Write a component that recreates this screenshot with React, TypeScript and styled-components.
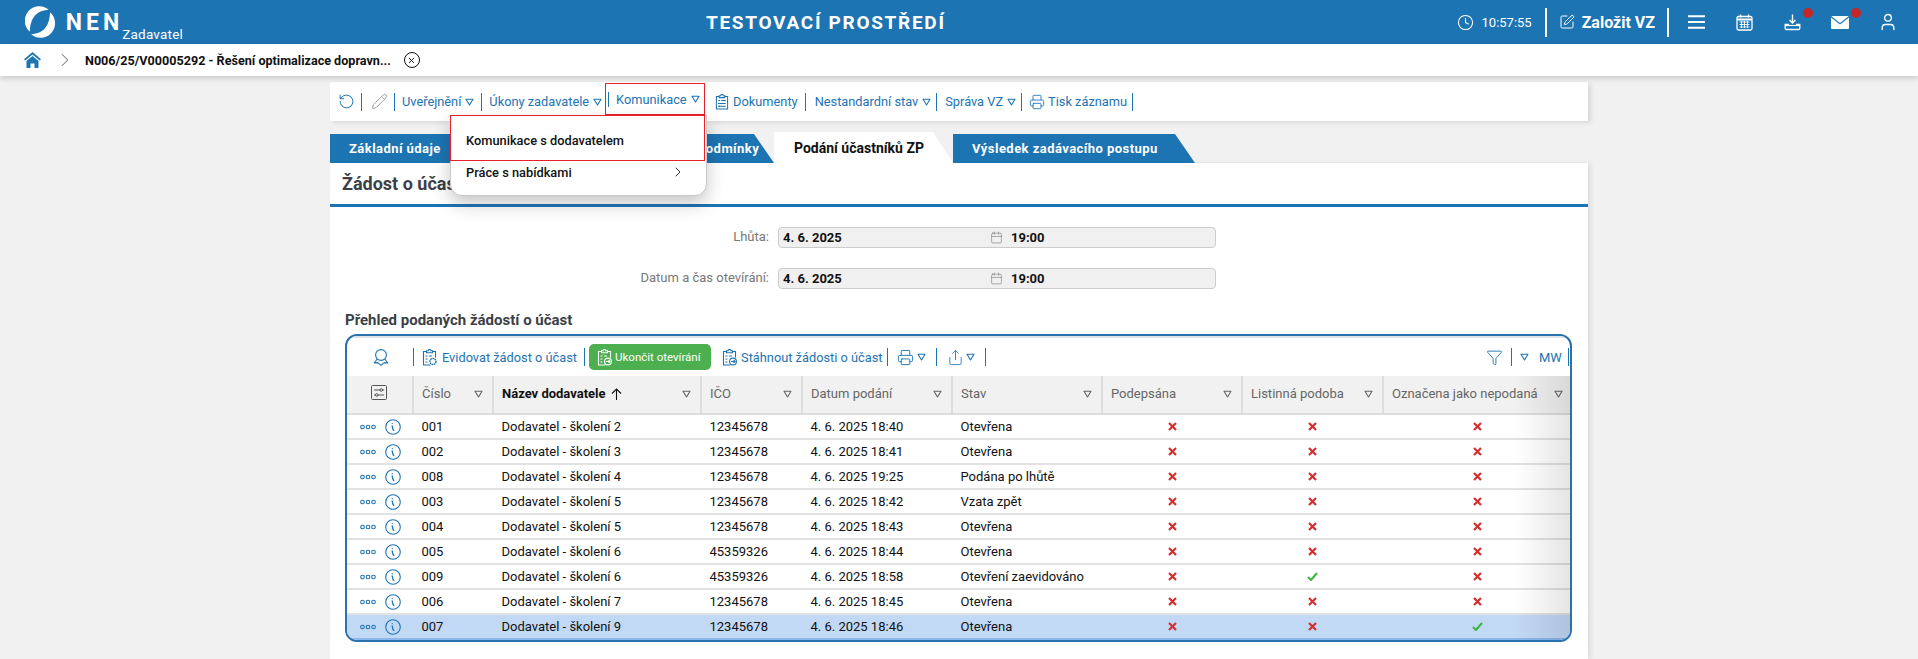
import React from "react";
import styled, { createGlobalStyle } from "styled-components";
import { Calendar, ChevronRight, Clock, Funnel, Pencil, Printer, RotateCcw, Share, SquarePen, User, X } from "lucide-react";

const BLUE = "#1d74b3";

const GlobalStyle = createGlobalStyle`
  html, body { margin: 0; padding: 0; height: 100%; overflow: hidden; }
  body { background: #f1f1f1; font-family: Roboto, "Liberation Sans", sans-serif; font-size: 13px; color: #111; }
`;

const Page = styled.div`
  height: 659px;
  display: flex;
  flex-direction: column;
  overflow: hidden;
`;

const TopBar = styled.header`
  height: 44px;
  flex: none;
  background: ${BLUE};
  color: #fff;
  display: flex;
  align-items: center;
  padding-left: 25px;
  box-sizing: border-box;
`;

const Brand = styled.div`
  display: flex;
  align-items: center;
  width: 158px;
  flex: none;
`;

const BrandName = styled.span`
  font-size: 23px;
  font-weight: 700;
  letter-spacing: 4px;
  margin-left: 11px;
  line-height: 1;
  margin-top: 1px;
`;

const BrandRole = styled.span`
  font-size: 13.5px;
  margin-left: -1px;
  margin-top: 26px;
  line-height: 1;
  letter-spacing: 0.2px;
`;

const EnvTitle = styled.div`
  margin-left: 523px;
  font-size: 19px;
  font-weight: 700;
  letter-spacing: 1.7px;
  white-space: nowrap;
`;

const TopRight = styled.div`
  margin-left: auto;
  padding-right: 6px;
  display: flex;
  align-items: center;
  height: 100%;
`;

const TimeText = styled.span`
  font-size: 13px;
  margin: 0 13px 0 8px;
`;

const TopSep = styled.span`
  width: 2px;
  height: 29px;
  background: #fff;
`;

const CreateLink = styled.span`
  display: flex;
  align-items: center;
  gap: 7px;
  padding: 0 12px;
  font-size: 16px;
  font-weight: 700;
`;

const TopIcon = styled.span<{ $dot?: boolean }>`
  position: relative;
  width: 48px;
  height: 44px;
  display: flex;
  align-items: center;
  justify-content: center;
  flex: none;
  ${(p) =>
    p.$dot &&
    `&::after {
      content: "";
      position: absolute;
      top: 8px;
      right: 3px;
      width: 10px;
      height: 10px;
      border-radius: 50%;
      background: #c62828;
    }`}
`;

const BurgerSlot = styled(TopIcon)`
  margin-left: 3px;
`;

const Crumbs = styled.nav`
  height: 32px;
  flex: none;
  background: #fff;
  box-shadow: 0 2px 6px rgba(0, 0, 0, 0.18);
  display: flex;
  align-items: center;
  padding-left: 24px;
  position: relative;
  z-index: 2;
`;

const CrumbArrow = styled(ChevronRight)`
  margin-left: 13px;
  flex: none;
`;

const CrumbTitle = styled.span`
  font-weight: 700;
  font-size: 12.6px;
  margin-left: 9px;
  white-space: nowrap;
`;

const CloseRound = styled.span`
  width: 16px;
  height: 16px;
  box-sizing: border-box;
  border: 1.3px solid #111;
  border-radius: 50%;
  margin-left: 13px;
  display: flex;
  align-items: center;
  justify-content: center;
`;

const Main = styled.main`
  width: 1258px;
  margin: 6px auto 0;
  flex: 1;
  display: flex;
  flex-direction: column;
`;

const ActionBar = styled.div`
  height: 39px;
  flex: none;
  background: #fff;
  box-shadow: 3px 2px 4px rgba(0, 0, 0, 0.1);
  display: flex;
  align-items: center;
  padding-left: 8px;
  color: ${BLUE};
  white-space: nowrap;
`;

const Sep = styled.span<{ $l: number; $r: number; $h?: number }>`
  width: 1px;
  height: ${(p) => p.$h ?? 18}px;
  background: ${BLUE};
  margin: 0 ${(p) => p.$r}px 0 ${(p) => p.$l}px;
  flex: none;
`;

const BarText = styled.span`
  display: inline-flex;
  align-items: center;
  font-size: 12.8px;
`;

const MenuAnchor = styled.div`
  position: relative;
  height: 32px;
  width: 100px;
  margin: 1px 0 6px 3px;
  border: 1px solid #e8202a;
  box-sizing: border-box;
  display: flex;
  align-items: center;
  padding-left: 1px;
  flex: none;
`;

const Dropdown = styled.div`
  position: absolute;
  top: 31px;
  right: -3px;
  width: 257px;
  height: 81px;
  background: #fff;
  border: 1px solid #c8c8c8;
  border-radius: 0 0 12px 12px;
  box-sizing: border-box;
  box-shadow: 0 8px 18px rgba(0, 0, 0, 0.22);
  z-index: 5;
  color: #111;
`;

const DropItem = styled.div<{ $marked?: boolean }>`
  display: flex;
  align-items: center;
  justify-content: space-between;
  box-sizing: border-box;
  font-weight: 500;
  font-size: 12.8px;
  height: ${(p) => (p.$marked ? 46 : 22)}px;
  width: ${(p) => (p.$marked ? "255px" : "auto")};
  padding: ${(p) => (p.$marked ? "5px 22px 0 15px" : "0 20px 0 15px")};
  margin: ${(p) => (p.$marked ? "-1px 0 0 -1px" : "0")};
  border: ${(p) => (p.$marked ? "1px solid #e8202a" : "none")};
`;

const Tabs = styled.div`
  display: flex;
  align-items: flex-end;
  margin-top: 11px;
  height: 31px;
  flex: none;
`;

const Tab = styled.div<{ $active?: boolean; $w: number; $pl: number }>`
  width: ${(p) => p.$w}px;
  padding-left: ${(p) => p.$pl}px;
  box-sizing: border-box;
  height: ${(p) => (p.$active ? 31 : 29)}px;
  display: flex;
  align-items: center;
  font-weight: 700;
  white-space: nowrap;
  background: ${(p) => (p.$active ? "#fff" : BLUE)};
  color: ${(p) => (p.$active ? "#111" : "#fff")};
  font-size: ${(p) => (p.$active ? 14 : 13)}px;
  letter-spacing: ${(p) => (p.$active ? 0 : 0.45)}px;
  clip-path: polygon(0 0, calc(100% - 20px) 0, 100% 100%, 0 100%);
`;

const Panel = styled.section`
  flex: 1;
  background: #fff;
  box-shadow: 3px 0 4px rgba(0, 0, 0, 0.08);
  padding: 0 16px 0 15px;
  display: flex;
  flex-direction: column;
`;

const PanelHead = styled.h2`
  height: 41px;
  margin: 0 -16px 0 -15px;
  padding-left: 12px;
  border-bottom: 3px solid ${BLUE};
  display: flex;
  align-items: center;
  font-size: 18px;
  font-weight: 700;
  color: #3b3f46;
`;

const FieldRow = styled.div`
  display: grid;
  grid-template-columns: 424px 438px;
  column-gap: 9px;
  align-items: center;
  margin-top: 20px;
`;

const FieldLabel = styled.span`
  text-align: right;
  color: #777;
  font-size: 13px;
  margin-top: -3px;
`;

const FieldBox = styled.div`
  height: 21px;
  box-sizing: border-box;
  background: #f0f0f0;
  border: 1px solid #ccc;
  border-radius: 4px;
  display: grid;
  grid-template-columns: 207px 21px 1fr;
  align-items: center;
  padding-left: 4px;
  font-weight: 700;
  font-size: 13px;
`;

const SectionTitle = styled.h3`
  margin: 21px 0 4px;
  height: 20px;
  line-height: 20px;
  font-size: 15px;
  font-weight: 700;
  color: #3b3f46;
`;

const GridFrame = styled.div`
  position: relative;
  border: 2px solid #2a72ab;
  border-radius: 12px;
  overflow: hidden;
  height: 308px;
  box-sizing: border-box;
`;

const GridTools = styled.div`
  height: 40px;
  box-sizing: border-box;
  border-top: 2px solid #dfe3e6;
  display: flex;
  align-items: center;
  color: ${BLUE};
  white-space: nowrap;
  padding-left: 26px;
`;

const IconGap = styled.span<{ $l?: number; $r: number }>`
  display: inline-flex;
  margin: 0 ${(p) => p.$r}px 0 ${(p) => p.$l ?? 0}px;
`;

const GreenButton = styled.span`
  height: 26px;
  width: 122px;
  margin-left: 4px;
  margin-right: 11px;
  box-sizing: border-box;
  background: #4caf50;
  border-radius: 5px;
  color: #fff;
  font-size: 11.5px;
  display: flex;
  align-items: center;
  gap: 3px;
  padding-left: 8px;
  flex: none;
`;

const GridToolsEnd = styled.div`
  margin-left: auto;
  display: flex;
  align-items: center;
`;

const MwText = styled.span`
  font-size: 13px;
  margin-left: 10px;
  width: 29px;
`;

const Table = styled.table`
  width: 100%;
  table-layout: fixed;
  border-collapse: collapse;
`;

const Th = styled.th<{ $strong?: boolean; $center?: boolean }>`
  height: 38px;
  box-sizing: border-box;
  padding: 0 9px 2px 8px;
  background: #f1f1f1;
  border-bottom: 2px solid #ddd;
  border-right: 2px solid #ddd;
  font-size: 13px;
  text-align: ${(p) => (p.$center ? "center" : "left")};
  font-weight: ${(p) => (p.$strong ? 700 : 400)};
  color: ${(p) => (p.$strong ? "#111" : "#666")};
  white-space: nowrap;
  &:last-child { border-right: none; }
`;

const ThInner = styled.div`
  display: flex;
  align-items: center;
  justify-content: space-between;
`;

const ThLabel = styled.span`
  display: inline-flex;
  align-items: center;
  gap: 5px;
`;

const Row = styled.tr<{ $selected?: boolean }>`
  background: ${(p) => (p.$selected ? "#c2d9f5" : "#fff")};
  td {
    height: 25px;
    box-sizing: border-box;
    padding: 0 8.5px;
    font-size: 13px;
    color: #111;
    border-bottom: 2px solid ${(p) => (p.$selected ? "#8ab8ee" : "#e2e2e2")};
    white-space: nowrap;
  }
`;

const MarkCell = styled.td`
  text-align: center;
  line-height: 0;
`;

const RowActions = styled.div`
  display: flex;
  align-items: center;
  gap: 9px;
  margin-left: 4px;
`;

const Fade = styled.div`
  position: absolute;
  right: 0;
  top: 40px;
  bottom: 0;
  width: 56px;
  background: linear-gradient(to right, rgba(0, 0, 0, 0), rgba(0, 0, 0, 0.1));
  pointer-events: none;
`;

const CaretSvg = styled.svg<{ $ml: number }>`
  flex: none;
  margin-left: ${(p) => p.$ml}px;
`;

const Caret = ({ color = BLUE, ml = 4 }: { color?: string; ml?: number }) => (
  <CaretSvg $ml={ml} width="9" height="8" viewBox="0 0 9 8">
    <path d="M1 1.2h7L4.5 7z" fill="none" stroke={color} strokeWidth="1.1" strokeLinejoin="round" />
  </CaretSvg>
);

const Logo = () => (
  <svg width="34" height="34" viewBox="0 0 34 34" fill="#fff">
    <path d="M27 3A16 16 0 0 0 5.5 28C6 14 11.4 3.9 27 3z" />
    <path d="M27 3A16 16 0 0 0 5.5 28C6 14 11.4 3.9 27 3z" transform="rotate(180 17 17)" />
  </svg>
);

const Burger = () => (
  <svg width="17" height="14" viewBox="0 0 17 14">
    <path d="M0 1.2h17M0 7h17M0 12.8h17" stroke="#fff" strokeWidth="2" />
  </svg>
);

const CalendarFull = () => (
  <svg width="17" height="17" viewBox="0 0 17 17">
    <rect x="1" y="2.5" width="15" height="13.5" rx="1.5" fill="none" stroke="#fff" strokeWidth="1.3" />
    <path d="M1 5.5h15" stroke="#fff" strokeWidth="2" />
    <path d="M4.5 0.5v3M12.5 0.5v3" stroke="#fff" strokeWidth="1.5" />
    <path d="M3.5 8h10M3.5 10.5h10M3.5 13h10M5.5 7v7M8.5 7v7M11.5 7v7" stroke="#fff" strokeWidth="0.9" />
  </svg>
);

const TrayDown = () => (
  <svg width="17" height="17" viewBox="0 0 17 17" fill="none" stroke="#fff">
    <path d="M8.5 0.5v8M5.5 6l3 3 3-3" strokeWidth="1.4" />
    <path d="M5 10.5H1.2v3.7a1.3 1.3 0 0 0 1.3 1.3h12a1.3 1.3 0 0 0 1.3-1.3v-3.7H12" strokeWidth="1.3" />
    <path d="M1 11.5h15" strokeWidth="1.2" />
  </svg>
);

const MailFull = () => (
  <svg width="18" height="13" viewBox="0 0 18 13">
    <path d="M1 0h16a1 1 0 0 1 .6.3L9 7 .4.3A1 1 0 0 1 1 0z" fill="#fff" />
    <path d="M0 1.6 9 8.6l9-7V12a1 1 0 0 1-1 1H1a1 1 0 0 1-1-1z" fill="#fff" />
  </svg>
);

const House = () => (
  <svg width="17" height="16" viewBox="0 0 17 16">
    <path d="M8.5 0 17 7.2 15.8 8.6 8.5 2.5 1.2 8.6 0 7.2z" fill={BLUE} />
    <path d="M2.5 9 8.5 4l6 5v7h-4v-4.5h-4V16h-4z" fill={BLUE} />
  </svg>
);

const Ribbon = () => (
  <svg width="16" height="17" viewBox="0 0 16 17" fill="none" stroke={BLUE} strokeWidth="1.1" strokeLinejoin="round">
    <circle cx="8" cy="6" r="5.4" />
    <path d="M4.2 10 1.2 14l3.6-.4L8 16.4l3.2-2.8 3.6.4-3-4" />
  </svg>
);

const ClipDoc = ({ size = 15, color = BLUE, kind }: { size?: number; color?: string; kind: "gear" | "arrow" | "plain" }) => (
  <svg width={size} height={size + 2} viewBox="0 0 15 17" fill="none" stroke={color} strokeWidth="1.1">
    <path d="M4.5 2.5H1.5v13.5h7M10.5 2.5h3v6" />
    <path d="M4.5 3.8V1.8h1.6a1.4 1.4 0 0 1 2.8 0h1.6v2z" />
    <path d="M3.5 7h2M3.5 10h2M3.5 13h2M7 7h3" />
    {kind === "gear" && <circle cx="11" cy="12.5" r="3" strokeDasharray="1.6 0.6" strokeWidth="1.4" />}
    {kind === "arrow" && (
      <>
        <circle cx="11" cy="12.5" r="3.4" />
        <path d="M9 12.5h4M11.6 11l1.5 1.5-1.5 1.5" />
      </>
    )}
    {kind === "plain" && <path d="M3.5 10h8M3.5 13h8M7 7h4.5M13.5 8v8h-5" />}
  </svg>
);

const Dots = () => (
  <svg width="16" height="6" viewBox="0 0 16 6" fill="none" stroke={BLUE} strokeWidth="1.1">
    <circle cx="2.5" cy="3" r="1.8" />
    <circle cx="8" cy="3" r="1.8" />
    <circle cx="13.5" cy="3" r="1.8" />
  </svg>
);

const InfoRound = () => (
  <svg width="16" height="16" viewBox="0 0 16 16" fill="none" stroke={BLUE}>
    <circle cx="8" cy="8" r="7.3" strokeWidth="1.1" />
    <path d="M7.2 4.6h.1M7.2 7c.5 1.8.3 3.4 1.6 4.4" strokeWidth="1.3" strokeLinecap="round" />
  </svg>
);

const Sliders = () => (
  <svg width="16" height="15" viewBox="0 0 16 15" fill="none" stroke="#555" strokeWidth="1">
    <rect x="0.5" y="0.5" width="15" height="14" rx="1" />
    <path d="M3 5h6M11.5 5H13M3 10h1.5M7 10h6" />
    <circle cx="10.2" cy="5" r="1.3" />
    <circle cx="5.8" cy="10" r="1.3" />
  </svg>
);

const Cross = () => (
  <svg width="9" height="9" viewBox="0 0 9 9">
    <path d="M1 1l7 7M8 1 1 8" stroke="#d32f2f" strokeWidth="2.2" />
  </svg>
);

const Tick = () => (
  <svg width="11" height="9" viewBox="0 0 11 9">
    <path d="M1 5l3 3 6-7" fill="none" stroke="#3cb43c" strokeWidth="2" />
  </svg>
);

const UpArrow = () => (
  <svg width="11" height="12" viewBox="0 0 11 12" fill="none" stroke="#111" strokeWidth="1.1">
    <path d="M5.5 12V1M1 5.5l4.5-4.5L10 5.5" />
  </svg>
);

const colWidths = [66, 80, 208, 101, 150, 150, 140, 141, 189];
const heads = ["Číslo", "Název dodavatele", "IČO", "Datum podání", "Stav", "Podepsána", "Listinná podoba", "Označena jako nepodaná"];

const rows = [
  { no: "001", name: "Dodavatel - školení 2", ico: "12345678", date: "4. 6. 2025 18:40", state: "Otevřena" },
  { no: "002", name: "Dodavatel - školení 3", ico: "12345678", date: "4. 6. 2025 18:41", state: "Otevřena" },
  { no: "008", name: "Dodavatel - školení 4", ico: "12345678", date: "4. 6. 2025 19:25", state: "Podána po lhůtě" },
  { no: "003", name: "Dodavatel - školení 5", ico: "12345678", date: "4. 6. 2025 18:42", state: "Vzata zpět" },
  { no: "004", name: "Dodavatel - školení 5", ico: "12345678", date: "4. 6. 2025 18:43", state: "Otevřena" },
  { no: "005", name: "Dodavatel - školení 6", ico: "45359326", date: "4. 6. 2025 18:44", state: "Otevřena" },
  { no: "009", name: "Dodavatel - školení 6", ico: "45359326", date: "4. 6. 2025 18:58", state: "Otevření zaevidováno", paper: true },
  { no: "006", name: "Dodavatel - školení 7", ico: "12345678", date: "4. 6. 2025 18:45", state: "Otevřena" },
  { no: "007", name: "Dodavatel - školení 9", ico: "12345678", date: "4. 6. 2025 18:46", state: "Otevřena", selected: true },
];

const App = () => {
  return (
    <Page>
      <GlobalStyle />
      <TopBar>
        <Brand>
          <Logo />
          <BrandName>NEN</BrandName>
          <BrandRole>Zadavatel</BrandRole>
        </Brand>
        <EnvTitle>TESTOVACÍ PROSTŘEDÍ</EnvTitle>
        <TopRight>
          <Clock size={17} strokeWidth={1.5} />
          <TimeText>10:57:55</TimeText>
          <TopSep />
          <CreateLink>
            <SquarePen size={16} strokeWidth={1.5} />
            Založit VZ
          </CreateLink>
          <TopSep />
          <BurgerSlot><Burger /></BurgerSlot>
          <TopIcon><CalendarFull /></TopIcon>
          <TopIcon $dot><TrayDown /></TopIcon>
          <TopIcon $dot><MailFull /></TopIcon>
          <TopIcon><User size={20} strokeWidth={1.6} /></TopIcon>
        </TopRight>
      </TopBar>

      <Crumbs>
        <House />
        <CrumbArrow size={22} color="#777" strokeWidth={1.1} />
        <CrumbTitle>N006/25/V00005292 - Řešení optimalizace dopravn...</CrumbTitle>
        <CloseRound><X size={9} color="#111" strokeWidth={2.4} /></CloseRound>
      </Crumbs>

      <Main>
        <ActionBar>
          <RotateCcw size={17} strokeWidth={1.4} />
          <Sep $l={6} $r={9} />
          <Pencil size={17} strokeWidth={1.3} color="#999" />
          <Sep $l={6} $r={7} />
          <BarText>Uveřejnění<Caret /></BarText>
          <Sep $l={7} $r={7} />
          <BarText>Úkony zadavatele<Caret /></BarText>
          <MenuAnchor>
            <Sep $l={1} $r={7} $h={15} />
            <BarText>Komunikace<Caret /></BarText>
            <Dropdown>
              <DropItem $marked>Komunikace s dodavatelem</DropItem>
              <DropItem>
                Práce s nabídkami
                <ChevronRight size={16} strokeWidth={1.4} color="#222" />
              </DropItem>
            </Dropdown>
          </MenuAnchor>
          <IconGap $l={10} $r={4}><ClipDoc size={14} kind="plain" /></IconGap>
          <BarText>Dokumenty</BarText>
          <Sep $l={7} $r={9} />
          <BarText>Nestandardní stav<Caret /></BarText>
          <Sep $l={5} $r={8} />
          <BarText>Správa VZ<Caret /></BarText>
          <Sep $l={5} $r={7} />
          <IconGap $r={3}><Printer size={16} strokeWidth={1.3} /></IconGap>
          <BarText>Tisk záznamu</BarText>
          <Sep $l={5} $r={0} />
        </ActionBar>

        <Tabs>
          <Tab $w={148} $pl={19}>Základní údaje</Tab>
          <Tab $w={296} $pl={160}>Zadávací podmínky</Tab>
          <Tab $active $w={179} $pl={20}>Podání účastníků ZP</Tab>
          <Tab $w={242} $pl={19}>Výsledek zadávacího postupu</Tab>
        </Tabs>

        <Panel>
          <PanelHead>Žádost o účast</PanelHead>
          <FieldRow>
            <FieldLabel>Lhůta:</FieldLabel>
            <FieldBox>
              4. 6. 2025
              <Calendar size={13} strokeWidth={1.1} color="#777" />
              19:00
            </FieldBox>
          </FieldRow>
          <FieldRow>
            <FieldLabel>Datum a čas otevírání:</FieldLabel>
            <FieldBox>
              4. 6. 2025
              <Calendar size={13} strokeWidth={1.1} color="#777" />
              19:00
            </FieldBox>
          </FieldRow>

          <SectionTitle>Přehled podaných žádostí o účast</SectionTitle>
          <GridFrame>
            <GridTools>
              <Ribbon />
              <Sep $l={24} $r={8} />
              <IconGap $r={5}><ClipDoc kind="gear" /></IconGap>
              <BarText>Evidovat žádost o účast</BarText>
              <Sep $l={7} $r={0} />
              <GreenButton>
                <ClipDoc color="#fff" kind="arrow" />
                Ukončit otevírání
              </GreenButton>
              <IconGap $r={4}><ClipDoc kind="arrow" /></IconGap>
              <BarText>Stáhnout žádosti o účast</BarText>
              <Sep $l={4} $r={9} />
              <Printer size={17} strokeWidth={1.3} />
              <Caret ml={3} />
              <Sep $l={10} $r={10} />
              <Share size={17} strokeWidth={1.2} />
              <Caret ml={2} />
              <Sep $l={10} $r={0} />
              <GridToolsEnd>
                <Funnel size={17} strokeWidth={1.3} />
                <Sep $l={8} $r={4} />
                <Caret />
                <MwText>MW</MwText>
                <Sep $l={0} $r={1} />
              </GridToolsEnd>
            </GridTools>
            <Table>
              <colgroup>
                {colWidths.map((w, i) => (
                  <col key={i} style={{ width: w }} />
                ))}
              </colgroup>
              <thead>
                <tr>
                  <Th $center><Sliders /></Th>
                  {heads.map((h, i) => (
                    <Th key={h} $strong={i === 1}>
                      <ThInner>
                        <ThLabel>
                          {h}
                          {i === 1 && <UpArrow />}
                        </ThLabel>
                        <Caret color="#666" />
                      </ThInner>
                    </Th>
                  ))}
                </tr>
              </thead>
              <tbody>
                {rows.map((r) => (
                  <Row key={r.no} $selected={r.selected}>
                    <td>
                      <RowActions><Dots /><InfoRound /></RowActions>
                    </td>
                    <td>{r.no}</td>
                    <td>{r.name}</td>
                    <td>{r.ico}</td>
                    <td>{r.date}</td>
                    <td>{r.state}</td>
                    <MarkCell><Cross /></MarkCell>
                    <MarkCell>{r.paper ? <Tick /> : <Cross />}</MarkCell>
                    <MarkCell>{r.selected ? <Tick /> : <Cross />}</MarkCell>
                  </Row>
                ))}
              </tbody>
            </Table>
            <Fade />
          </GridFrame>
        </Panel>
      </Main>
    </Page>
  );
};

export default App;
